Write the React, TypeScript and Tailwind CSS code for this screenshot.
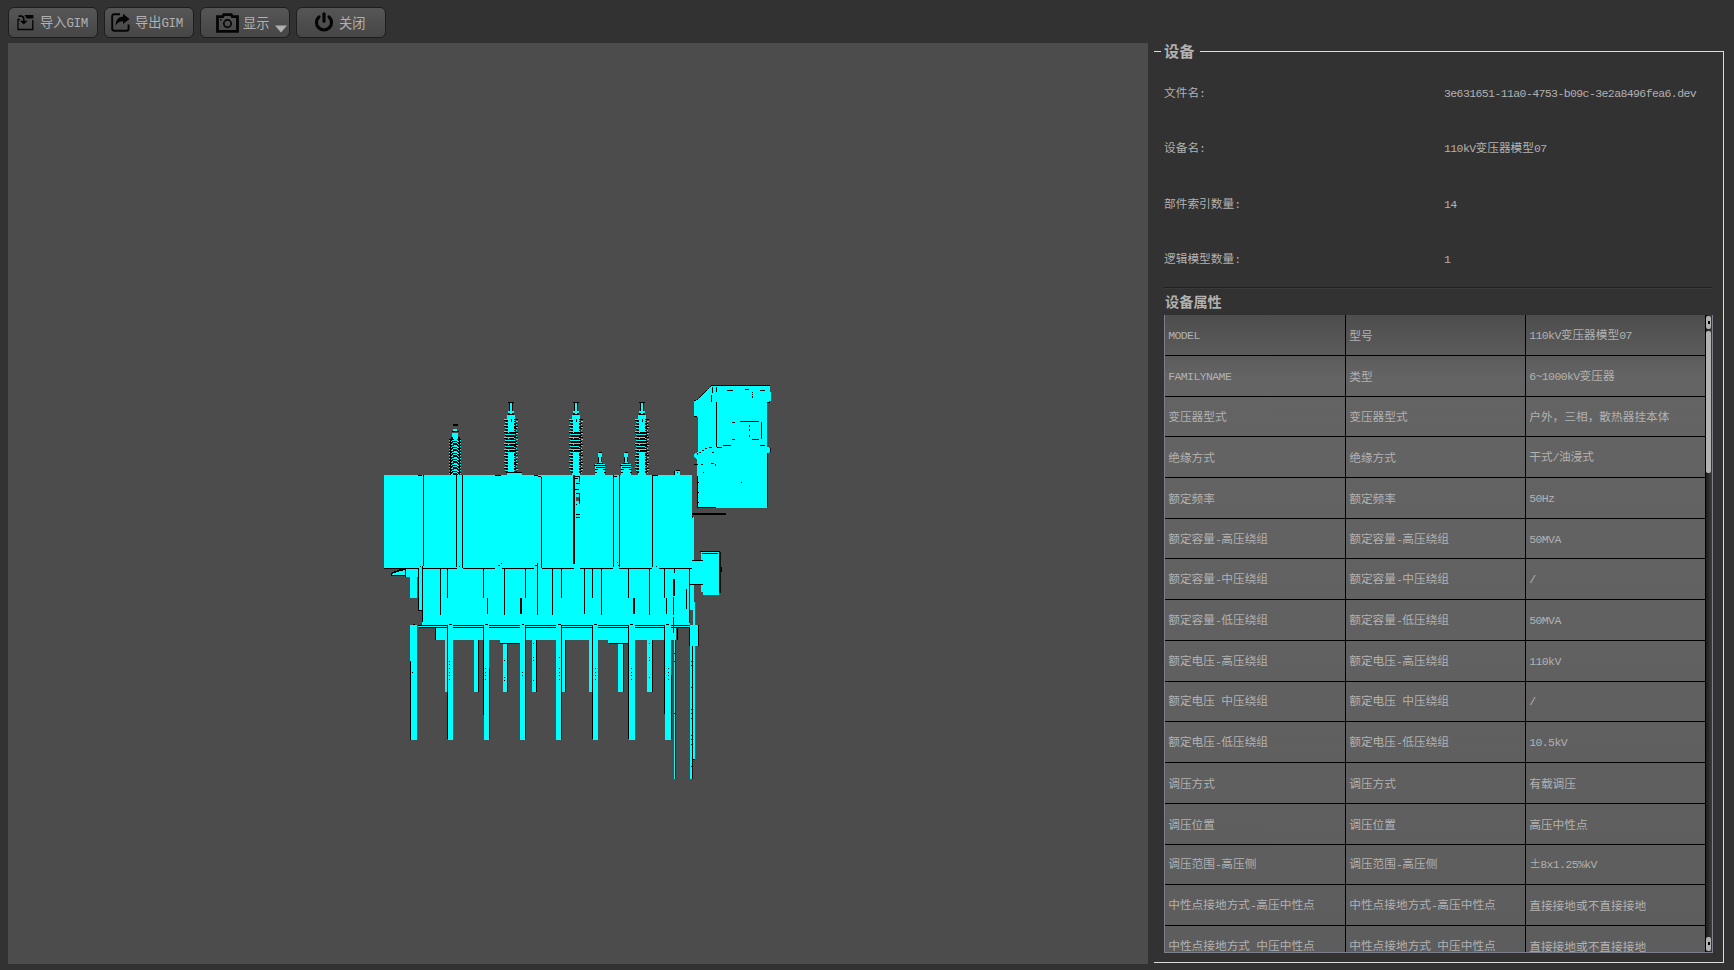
import React from "react";

const attributes: [string, string, string][] = [
  ["MODEL", "型号", "110kV变压器模型07"],
  ["FAMILYNAME", "类型", "6~1000kV变压器"],
  ["变压器型式", "变压器型式", "户外，三相，散热器挂本体"],
  ["绝缘方式", "绝缘方式", "干式/油浸式"],
  ["额定频率", "额定频率", "50Hz"],
  ["额定容量-高压绕组", "额定容量-高压绕组", "50MVA"],
  ["额定容量-中压绕组", "额定容量-中压绕组", "/"],
  ["额定容量-低压绕组", "额定容量-低压绕组", "50MVA"],
  ["额定电压-高压绕组", "额定电压-高压绕组", "110kV"],
  ["额定电压 中压绕组", "额定电压 中压绕组", "/"],
  ["额定电压-低压绕组", "额定电压-低压绕组", "10.5kV"],
  ["调压方式", "调压方式", "有载调压"],
  ["调压位置", "调压位置", "高压中性点"],
  ["调压范围-高压侧", "调压范围-高压侧", "±8x1.25%kV"],
  ["中性点接地方式-高压中性点", "中性点接地方式-高压中性点", "直接接地或不直接接地"],
  ["中性点接地方式 中压中性点", "中性点接地方式 中压中性点", "直接接地或不直接接地"],
];

const info: [string, string][] = [
  ["文件名:", "3e631651-11a0-4753-b09c-3e2a8496fea6.dev"],
  ["设备名:", "110kV变压器模型07"],
  ["部件索引数量:", "14"],
  ["逻辑模型数量:", "1"],
];

/** Han characters keep the CJK face, Latin runs use a half-width mono face. */
function Mixed({ text, big = false }: { text: string; big?: boolean }) {
  return (
    <span className="whitespace-pre">
      {text.split(/([\x20-\x7e]+|±)/).map((part, i) =>
        part === "±" ? (
          <span key={i} className="inline-block w-[11px] text-center">
            {part}
          </span>
        ) : i % 2 ? (
          <span
            key={i}
            className={
              big
                ? "font-['Liberation_Mono',monospace] text-[12.5px] tracking-[-0.3px]"
                : "font-['Liberation_Mono',monospace] text-[11.5px] tracking-[-0.6px]"
            }
          >
            {part}
          </span>
        ) : (
          part
        ),
      )}
    </span>
  );
}

function ToolButton({ width, children }: { width: string; children: React.ReactNode }) {
  return (
    <button
      className={`${width} relative flex h-[31px] shrink-0 items-center rounded-[6px] border border-[#1e1e1e] bg-linear-to-b from-[#565656] via-[#4e4e4e] to-[#464646] text-[13.2px] leading-none text-[#b1b1b1]`}
    >
      {children}
    </button>
  );
}

const ImportIcon = () => (
  <svg className="ml-[8px] h-[17px] w-[17px] shrink-0" viewBox="0 0 17 17" fill="none" stroke="#050505">
    <path d="M3 5.5H1v10h14.8V6" strokeWidth="1.3" />
    <path d="M7.5 1H16.4v3.4H9.6z" fill="#050505" stroke="none" />
    <path d="M1.5 2.1h2.9q2.4.3 2.4 3v3.4" strokeWidth="1.6" />
    <path d="M2.8 6.8h8L6.8 10.6z" fill="#050505" stroke="none" />
  </svg>
);

const ExportIcon = () => (
  <svg className="ml-[6px] h-[19px] w-[19px] shrink-0" viewBox="0 0 19 19" fill="none" stroke="#050505">
    <path d="M9 1.2H3.2Q1.2 1.2 1.2 3.2v12.6q0 2 2 2h12.4q2 0 2-2V11.5" strokeWidth="1.9" />
    <path d="M12 .8 18.6 6 12 11V8.2Q7.2 8.2 4.6 12.6 4.6 4.2 12 3.6z" fill="#050505" stroke="none" />
  </svg>
);

const CameraIcon = () => (
  <svg className="ml-[15px] h-[20px] w-[23px] shrink-0" viewBox="0 0 23 20" fill="none" stroke="#050505">
    <path d="M1.5 3.6h5.2L7.8 1.6h7.4l1.1 2h5.2v14.8H1.5z" strokeWidth="2.8" />
    <circle cx="11.5" cy="10.6" r="3.7" strokeWidth="1.7" />
    <circle cx="4.9" cy="6.8" r=".9" fill="#050505" stroke="none" />
  </svg>
);

const PowerIcon = () => (
  <svg className="ml-[17px] h-[21px] w-[20px] shrink-0" viewBox="0 0 20 21" fill="none" stroke="#050505" strokeLinecap="round">
    <path d="M5 4.9a7.5 7.5 0 1 0 10 0" strokeWidth="3.2" />
    <path d="M10 1.8v7.4" strokeWidth="3.2" />
  </svg>
);

type Box = [number, number, number, number];

const rects = (list: Box[]) => list.map(([x, y, w, h]) => `M${x} ${y}h${w}v${h}h${-w}z`).join("");

const bodyCyan: Box[] = [
  [384, 475, 308, 94], [690, 517, 4, 44], [422, 569, 268, 56], [418, 569, 5, 41],
  [405, 569, 13, 8], [410, 577, 7, 21], [418, 625, 272, 3], [436, 628, 240, 12],
  [500, 640, 20, 3], [608, 640, 20, 3], [690, 560, 13, 24], [690, 584, 4, 26], [693, 602, 2, 23],
  [701, 552, 18, 40], [703, 592, 16, 3], [690, 625, 8, 21],
];
const bodyBlack: Box[] = [
  [384, 568, 34, 1], [423, 568, 34, 1], [463, 568, 32, 1], [502, 568, 32, 1], [542, 568, 32, 1],
  [580, 568, 33, 1], [619, 568, 33, 1], [659, 568, 33, 1],
  [423, 475, 1, 91], [456, 475, 1, 92], [462, 475, 1, 93], [541, 477, 1, 91], [573, 475, 2, 89],
  [613, 475, 1, 92], [619, 475, 1, 92], [652, 475, 1, 92],
  [418, 568, 1, 42], [422, 566, 1, 56], [405, 569, 1, 8], [418, 610, 5, 1],
  [440, 569, 1, 46], [447, 569, 1, 29], [483, 569, 1, 29], [487, 598, 1, 16], [504, 569, 1, 46],
  [520, 598, 2, 16], [525, 569, 1, 29], [537, 563, 1, 52], [552, 569, 1, 46], [561, 569, 1, 29],
  [584, 569, 1, 45], [592, 569, 1, 29], [601, 569, 1, 46], [628, 569, 1, 29], [633, 598, 2, 16],
  [649, 569, 1, 46], [664, 569, 1, 29], [666, 598, 1, 16], [674, 569, 1, 4], [673, 579, 2, 17],
  [673, 597, 1, 18], [673, 617, 1, 16], [686, 589, 1, 20], [689, 569, 1, 54],
  [418, 625, 272, 1], [418, 627, 272, 1], [435, 628, 1, 12], [500, 643, 20, 1], [609, 643, 19, 1],
  [677, 628, 1, 12], [689, 627, 1, 19], [698, 625, 1, 21], [692, 560, 11, 1], [690, 584, 13, 1],
  [719, 552, 2, 41], [702, 553, 16, 1], [700, 551, 20, 1], [692, 513, 34, 2], [720, 567, 2, 5],
  [692, 516, 1, 2], [418, 475, 4, 1], [495, 475, 6, 1], [534, 475, 4, 1], [538, 476, 3, 1],
  [653, 475, 5, 1], [614, 476, 3, 1], [498, 565, 2, 1], [501, 563, 1, 1], [535, 565, 2, 1],
  [617, 562, 1, 1], [618, 565, 1, 1], [656, 566, 1, 1], [420, 566, 1, 1], [459, 566, 1, 1],
];
const windingBlack: Box[] = [
  [575, 476, 5, 1], [575, 478, 3, 1], [579, 476, 1, 6], [576, 483, 4, 1], [575, 489, 4, 1],
  [576, 493, 4, 1], [579, 493, 1, 11], [576, 504, 1, 1], [576, 514, 4, 1], [576, 517, 4, 1],
];

const legs: { cyan: Box; edges: Box[] }[] = [
  { cyan: [410, 625, 7, 115], edges: [[410, 661, 1, 79], [413, 624, 2, 1]] },
  { cyan: [448, 625, 5, 115], edges: [[447, 625, 1, 114], [449, 624, 3, 1]] },
  { cyan: [484, 625, 5, 115], edges: [[483, 625, 1, 90], [489, 668, 1, 71], [485, 624, 3, 1]] },
  { cyan: [520, 625, 5, 115], edges: [[525, 625, 1, 114], [522, 624, 2, 1]] },
  { cyan: [556, 625, 5, 115], edges: [[561, 625, 1, 114], [558, 624, 3, 1]] },
  { cyan: [593, 625, 5, 115], edges: [[592, 625, 1, 114], [594, 624, 3, 1]] },
  { cyan: [629, 625, 6, 115], edges: [[628, 625, 1, 114], [630, 624, 3, 1]] },
  { cyan: [665, 625, 6, 115], edges: [[664, 625, 1, 89], [671, 675, 1, 64], [666, 624, 3, 1]] },
];
const backCyan: Box[] = [
  [445, 640, 3, 52], [474, 640, 4, 52], [503, 644, 4, 48], [532, 640, 4, 52], [562, 640, 3, 52],
  [589, 640, 4, 52], [618, 644, 5, 48], [647, 640, 5, 52],
  [674, 640, 1, 139], [690, 640, 2, 139], [693, 640, 2, 119],
];
const backBlack: Box[] = [
  [478, 640, 1, 52], [507, 644, 1, 48], [536, 640, 1, 52], [565, 640, 1, 52], [623, 644, 1, 48],
  [652, 640, 1, 52], [675, 640, 1, 139], [692, 639, 1, 140], [693, 759, 2, 1],
];
const boltsX = [449, 485, 559, 595, 631, 668];
const bolts: Box[] = [
  ...boltsX.flatMap((x): Box[] => [[x, 668, 1, 1], [x, 672, 1, 1], [x, 675, 1, 1], [x, 679, 1, 1]]),
  [449, 661, 1, 1], [449, 664, 1, 1], [412, 672, 1, 1], [522, 672, 1, 1], [522, 675, 1, 1],
  [504, 660, 1, 1], [504, 677, 1, 1], [504, 680, 1, 1], [533, 657, 1, 1], [533, 660, 1, 1],
  [533, 680, 1, 1], [649, 657, 1, 1], [649, 660, 1, 1], [649, 677, 1, 1], [533, 643, 1, 1],
  [559, 657, 1, 1], [649, 643, 1, 1], [674, 653, 1, 1], [674, 661, 1, 1], [674, 713, 1, 1],
  [691, 661, 1, 1], [691, 665, 1, 1], [691, 687, 1, 1], [691, 709, 1, 1], [691, 713, 1, 1],
  [691, 718, 1, 1], [691, 735, 1, 1], [691, 739, 1, 1], [691, 744, 1, 1], [691, 766, 1, 1],
];

const cabinetBlack: Box[] = [
  [711, 385, 59, 1], [716, 402, 1, 45], [740, 421, 19, 1], [761, 422, 1, 17], [752, 439, 7, 1],
  [732, 422, 3, 1], [732, 439, 3, 1], [749, 425, 1, 2], [749, 429, 1, 2], [749, 435, 1, 2],
  [752, 392, 1, 1], [752, 394, 1, 1], [752, 396, 1, 2], [727, 390, 6, 1], [745, 389, 4, 1],
  [760, 390, 5, 1], [723, 445, 8, 1], [760, 445, 5, 1], [712, 387, 1, 6], [716, 387, 1, 5],
  [711, 395, 1, 7], [767, 453, 1, 54], [697, 476, 1, 31], [697, 507, 19, 1], [717, 447, 5, 1],
  [712, 452, 2, 1], [709, 447, 3, 1], [705, 448, 2, 1], [702, 450, 2, 1], [699, 452, 2, 1],
  [697, 453, 1, 2], [694, 464, 4, 1], [701, 464, 2, 1], [711, 463, 3, 1], [715, 464, 1, 2],
  [703, 472, 1, 1], [741, 482, 1, 1], [698, 482, 1, 1], [698, 492, 1, 1], [698, 502, 1, 1],
  [770, 448, 1, 4], [767, 402, 3, 1], [694, 416, 3, 1],
];

/** One high-voltage bushing, built row by row around its axis. */
function bushing(cx: number) {
  const cyan: Box[] = [[cx - 2, 403, 3, 9], [cx - 3, 411, 6, 2], [cx - 1, 412, 2, 4], [cx - 4, 415, 8, 60]];
  const black: Box[] = [
    [cx - 3, 402, 6, 1], [cx - 2, 403, 1, 8], [cx + 1, 403, 1, 8], [cx - 3, 413, 2, 1],
    [cx + 1, 413, 2, 1], [cx - 3, 414, 6, 1], [cx, 419, 1, 3],
  ];
  for (let y = 419, i = 0; y < 473; y += 3, i++) {
    const reach = i % 2 ? 6 : 7;
    black.push([cx - reach, y + 1, reach - 3, 1], [cx + 3, y + (i % 3 ? 1 : 0), reach - 3, 1]);
    black.push([cx - 5, y + 2, 2, 1], [cx + 3, y + 2, 2, 1]);
    cyan.push([cx - reach, y, reach, 1], [cx + 2, y + 2, reach - 2, 1]);
    if (y > 430 && y < 451) {
      black.push([cx - (i % 2 ? 3 : 2), y + 1, i % 2 ? 6 : 5, 1], [cx - 3, y + 2, 6, 1]);
    }
  }
  return { cyan, black };
}

/** The shorter neutral bushing on the left of the tank. */
function neutralBushing(cx: number) {
  const cyan: Box[] = [[cx - 2, 429, 4, 3], [cx - 3, 433, 6, 7], [cx - 4, 438, 8, 37]];
  const black: Box[] = [[cx - 2, 424, 5, 2], [cx - 3, 431, 7, 1], [cx - 4, 437, 2, 3], [cx + 3, 437, 2, 3]];
  for (let y = 439, i = 0; y < 473; y += 3, i++) {
    black.push([cx - 6, y, 5 - (i % 2), 1], [cx + 2, y, 4, 1], [cx - 5, y + 1, 2, 1], [cx + 3, y + 1, 2, 1]);
    black.push([cx - 3 + (i % 2), y + 2, 5, 1], [cx - 5, y + 2, 1, 1], [cx + 4, y + 2, 1, 1]);
    if (i % 2) black.push([cx - 2, y + 1, 4, 1]);
    cyan.push([cx - 6, y + 1, 1, 1], [cx + 5, y + 1, 1, 1]);
  }
  return { cyan, black };
}

function smallBushing(cx: number) {
  const cyan: Box[] = [[cx - 2, 453, 4, 4], [cx - 1, 457, 3, 6], [cx - 5, 464, 10, 11]];
  const black: Box[] = [
    [cx - 1, 452, 3, 1], [cx - 2, 457, 1, 5], [cx + 1, 457, 1, 5], [cx - 3, 463, 6, 1],
    [cx - 6, 465, 12, 1], [cx - 4, 467, 9, 1], [cx - 5, 469, 3, 1], [cx + 3, 469, 3, 1],
    [cx - 5, 472, 2, 1], [cx + 4, 472, 2, 1],
  ];
  return { cyan, black };
}

const bushings = [bushing(511), bushing(576), bushing(642), neutralBushing(455), smallBushing(600), smallBushing(626)];

function TransformerModel() {
  return (
    <svg className="block h-full w-full" viewBox="8 43 1140 921" shapeRendering="crispEdges">
      <path fill="#00ffff" d={rects(backCyan)} />
      <path fill="#000" d={rects(backBlack)} />
      <path fill="#000" d="M391 573 400 569 405 569V576H391z" />
      <path fill="#00ffff" d="M392 574 400 571 405 570V575H392z" />
      {bushings.map((b, i) => (
        <g key={i}>
          <path fill="#00ffff" d={rects(b.cyan)} />
          <path fill="#000" d={rects(b.black)} />
        </g>
      ))}
      <path fill="#00ffff" d={rects(bodyCyan)} />
      <path fill="#00ffff" d="M674 475V471H680V475zM514 473h8v2h-8z" />
      <path fill="#000" d="M674 471h1v4h-1zM676 470h4v1h-4zM677 472h1v1h-1zM508 472h14v1h-14z" />
      <path fill="#000" d={rects(bodyBlack)} />
      <path fill="#000" d={rects(windingBlack)} />
      <path fill="#4c4c4c" d="M576 497h3v4h-3zM690 610h3v11h-3z" />
      {legs.map((leg, i) => (
        <g key={i}>
          <path fill="#00ffff" d={rects([leg.cyan])} />
          <path fill="#000" d={rects(leg.edges)} />
        </g>
      ))}
      <path fill="#000" d={rects(bolts)} />
      <path
        fill="#00ffff"
        d="M694 401 698 399 711 386H770V392H771V401L767 402V447L771 448V452L767 453V508H697V460L694 457V454L698 452V417L694 416z"
      />
      <path fill="none" stroke="#000" strokeDasharray="2 1" d="M694 401 698 399 711 386" />
      <path fill="#000" d={rects(cabinetBlack)} />
    </svg>
  );
}

export default function App() {
  return (
    <div className="flex h-[970px] w-[1734px] flex-col overflow-hidden bg-[#323232] font-['Noto_Sans_CJK_SC',sans-serif] text-[11.7px] text-[#b1b1b1]">
      <header className="flex h-[41px] shrink-0 gap-[6px] pt-[7px] pl-[8px]">
        <ToolButton width="w-[90px]">
          <ImportIcon />
          <span className="ml-[6px]"><Mixed text="导入GIM" big /></span>
        </ToolButton>
        <ToolButton width="w-[90px]">
          <ExportIcon />
          <span className="ml-[5px]"><Mixed text="导出GIM" big /></span>
        </ToolButton>
        <ToolButton width="w-[90px]">
          <CameraIcon />
          <span className="ml-[4px]">显示</span>
          <svg className="absolute right-[2px] bottom-[4px] h-[8px] w-[12px]" viewBox="0 0 12 8">
            <path d="M0 .5h12L6 7.5z" fill="#b1b1b1" />
          </svg>
        </ToolButton>
        <ToolButton width="w-[90px]">
          <PowerIcon />
          <span className="ml-[5px]">关闭</span>
        </ToolButton>
      </header>

      <main className="flex h-[923px]">
        <section className="mt-[2px] ml-[8px] h-[921px] w-[1140px] shrink-0 bg-[#4c4c4c]">
          <TransformerModel />
        </section>

        <fieldset className="ml-[6px] h-[922px] w-[570px] min-w-0 border border-l-0 border-[#dcdcdc]">
          <legend className="ml-[7px] h-[20px] pr-[6px] pl-[3px] text-[15.2px] leading-[18px] font-bold">设备</legend>

          <div className="pl-[10px]">
            <dl className="flex flex-col pt-[4px]">
              {info.map(([label, value]) => (
                <div key={label} className="flex h-[55.4px] items-center">
                  <dt className="w-[280px]"><Mixed text={label} /></dt>
                  <dd><Mixed text={value} /></dd>
                </div>
              ))}
            </dl>

            <div className="mr-[11px] h-[2px] border-t border-b border-t-[#202020] border-b-[#3a3a3a]" />
            <h2 className="h-[26px] pt-[2px] pl-[1px] text-[14.2px] leading-[20px] font-bold">设备属性</h2>

            <div className="flex h-[638px] w-[549px] overflow-hidden border-r border-b border-l border-[#7c7f8c]">
              <div className="h-full w-[541px] overflow-hidden bg-linear-to-b from-[#4d4d4d] from-0% via-[#646464] via-10% to-[#5d5d5d] to-100% pt-[0.6px]">
                {attributes.map(([key, name, value], i) => (
                  <div key={i} className="grid h-[40.73px] grid-cols-[181px_180px_180px]">
                    {[key, name, value].map((cell, c) => (
                      <div key={c} className="flex items-center border-r border-b border-black pl-[3.2px] leading-[16px]">
                        <Mixed text={cell} />
                      </div>
                    ))}
                  </div>
                ))}
              </div>
              <div className="flex w-[6px] flex-col bg-linear-to-r from-[#1e1e1e] to-[#3c3c3c]">
                <div className="mt-[1px] flex h-[13px] w-[5px] items-center justify-center rounded-[2px] bg-[#b1b1b1]">
                  <span className="h-[3px] w-[2px] bg-black" />
                </div>
                <div className="mt-[2px] h-[142px] w-[5px] rounded-[2px] bg-[#b1b1b1]" />
                <div className="mt-auto mb-[1px] flex h-[14px] w-[5px] items-center justify-center rounded-[2px] bg-[#b1b1b1]">
                  <span className="h-[3px] w-[2px] bg-black" />
                </div>
              </div>
            </div>
          </div>
        </fieldset>
      </main>
    </div>
  );
}
